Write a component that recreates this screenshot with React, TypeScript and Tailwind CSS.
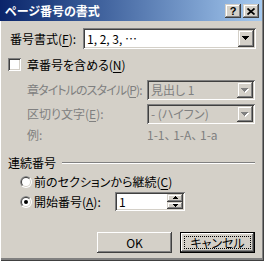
import React from 'react';

const raised =
  'bg-[#d4d0c8] shadow-[inset_-1px_-1px_#404040,inset_1px_1px_#d4d0c8,inset_-2px_-2px_#808080,inset_2px_2px_#ffffff]';
const button =
  'bg-[#d4d0c8] shadow-[inset_-1px_-1px_#404040,inset_1px_1px_#ffffff,inset_-2px_-2px_#808080,inset_2px_2px_#d4d0c8]';
const sunken =
  'shadow-[inset_1px_1px_#808080,inset_-1px_-1px_#ffffff,inset_2px_2px_#404040,inset_-2px_-2px_#d4d0c8]';

const DownArrow = ({ disabled }: { disabled?: boolean }) => {
  const d = 'M0 0H7V1H6V2H5V3H4V4H3V3H2V2H1V1H0Z';
  return (
    <svg width="8" height="5" viewBox="0 0 8 5" shapeRendering="crispEdges">
      {disabled && <path d={d} fill="#ffffff" transform="translate(1 1)" />}
      <path d={d} fill={disabled ? '#808080' : '#000000'} />
    </svg>
  );
};

const Combo = ({ text, disabled, className }: { text: string; disabled?: boolean; className: string }) => (
  <div
    className={`flex items-stretch p-[2px] ${sunken} ${className} ${
      disabled ? 'bg-[#d4d0c8] text-[#808080]' : 'bg-white text-black'
    }`}
  >
    <span className="flex-1 flex items-center pl-[2px] whitespace-pre">{text}</span>
    <div className={`w-[16px] flex items-center justify-center ${raised}`}>
      <DownArrow disabled={disabled} />
    </div>
  </div>
);

const Radio = ({ checked }: { checked?: boolean }) => {
  const half = (r: number) => {
    const a = r * 0.7071;
    return `M${6 - a} ${6 + a}A${r} ${r} 0 0 1 ${6 + a} ${6 - a}Z`;
  };
  return (
    <svg width="12" height="12" viewBox="0 0 12 12">
      <circle cx="6" cy="6" r="6" fill="#ffffff" />
      <path d={half(6)} fill="#808080" />
      <circle cx="6" cy="6" r="5" fill="#d4d0c8" />
      <path d={half(5)} fill="#404040" />
      <circle cx="6" cy="6" r="4" fill="#ffffff" />
      {checked && <circle cx="6" cy="6" r="2" fill="#000000" />}
    </svg>
  );
};

const U = ({ children }: { children: React.ReactNode }) => <span className="underline underline-offset-2">{children}</span>;

export default function App() {
  return (
    <div className="w-[264px] h-[261px] bg-[#d4d0c8] flex flex-col overflow-hidden text-[12px] leading-[16px] text-black font-['Noto_Sans_CJK_JP',sans-serif] [font-feature-settings:'palt'] shadow-[inset_1px_0_#ffffff,inset_-1px_-1px_#404040,inset_-2px_-2px_#808080,inset_0_-3px_#808080]">
      {/* Title bar */}
      <div className="h-[21px] mr-[2px] flex items-center pl-[5px] pr-[3px] bg-linear-to-r from-[#0a246a] to-[#a6caf0]">
        <span className="flex-1 font-bold text-white">ページ番号の書式</span>
        <div className="flex gap-[2px] mt-[1px]">
          <div className={`w-[16px] h-[14px] flex items-center justify-center ${raised}`}>
            <span className="font-['Liberation_Sans',sans-serif] font-bold text-[11px] leading-none">?</span>
          </div>
          <div className={`w-[16px] h-[14px] flex items-center justify-center ${raised}`}>
            <svg width="8" height="7" viewBox="0 0 8 7">
              <path d="M0.5 0.5L7.5 6.5M7.5 0.5L0.5 6.5" stroke="#000" strokeWidth="1.7" />
            </svg>
          </div>
        </div>
      </div>

      {/* Number format */}
      <div className="flex items-center mt-[7px] pl-[10px]">
        <span className="w-[73px]">
          番号書式(<U>F</U>):
        </span>
        <Combo text="1, 2, 3, …" className="w-[173px] h-[21px]" />
      </div>

      {/* Include chapter number */}
      <div className="flex items-center gap-[6px] mt-[9px] pl-[8px] h-[13px]">
        <div className={`w-[13px] h-[13px] bg-white ${sunken}`} />
        <span>
          章番号を含める(<U>N</U>)
        </span>
      </div>

      <div className="flex items-center mt-[9px] pl-[27px] text-[#808080]">
        <span className="w-[120px] whitespace-nowrap tracking-[-0.9px]">
          章タイトルのスタイル(<U>P</U>):
        </span>
        <Combo text="見出し 1" disabled className="w-[108px] h-[20px]" />
      </div>
      <div className="flex items-center mt-[4px] pl-[27px] text-[#808080]">
        <span className="w-[120px]">
          区切り文字(<U>E</U>):
        </span>
        <Combo text="- (ハイフン)" disabled className="w-[108px] h-[20px]" />
      </div>
      <div className="flex items-center mt-[3px] pl-[27px] h-[16px] text-[#808080]">
        <span className="w-[120px]">例:</span>
        <span>1-1、 1-A、 1-a</span>
      </div>

      {/* Page numbering group */}
      <div className="flex items-center mt-[12px] h-[16px] pl-[8px] pr-[9px]">
        <span>連続番号</span>
        <div className="flex-1 ml-[6px] h-[2px] border-t border-b border-t-[#808080] border-b-white" />
      </div>
      <div className="flex items-center gap-[2px] mt-[3px] h-[16px] pl-[20px]">
        <Radio />
        <span>
          前のセクションから継続(<U>C</U>)
        </span>
      </div>
      <div className="flex items-center gap-[2px] mt-[2px] pl-[20px]">
        <Radio checked />
        <span className="w-[79px]">
          開始番号(<U>A</U>):
        </span>
        <div className={`w-[70px] h-[19px] flex items-stretch p-[2px] bg-white ${sunken}`}>
          <span className="flex-1 flex items-center pl-[2px]">1</span>
          <div className="w-[16px] flex flex-col">
            <div className={`flex-1 flex items-center justify-center ${raised}`}>
              <svg width="5" height="3" viewBox="0 0 5 3" shapeRendering="crispEdges">
                <path d="M0 3H5V2H4V1H3V0H2V1H1V2H0Z" fill="#000" />
              </svg>
            </div>
            <div className={`flex-1 flex items-center justify-center ${raised}`}>
              <svg width="5" height="3" viewBox="0 0 5 3" shapeRendering="crispEdges">
                <path d="M0 0H5V1H4V2H3V3H2V2H1V1H0Z" fill="#000" />
              </svg>
            </div>
          </div>
        </div>
      </div>

      {/* Buttons */}
      <div className="flex gap-[8px] mt-[21px] pl-[97px]">
        <div className={`w-[75px] h-[21px] flex items-center justify-center ${button}`}>OK</div>
        <div className="w-[75px] h-[21px] border border-black">
          <div className={`w-full h-full p-[3px] ${button}`}>
            <div className="w-full h-full border border-dotted border-black flex items-center justify-center">
              キャンセル
            </div>
          </div>
        </div>
      </div>
    </div>
  );
}
